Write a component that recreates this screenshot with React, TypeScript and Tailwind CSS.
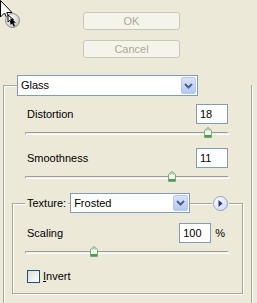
import React from 'react'

const font = { fontFamily: '"Liberation Sans", Arial, sans-serif' }

function Cursor() {
  return (
    <svg className="absolute left-0 top-0" width="22" height="30" viewBox="0 0 22 30">
      <defs>
        <radialGradient id="cg" cx="40%" cy="35%" r="70%">
          <stop offset="0%" stopColor="#ffffff" />
          <stop offset="100%" stopColor="#c4c4c4" />
        </radialGradient>
      </defs>
      <path d="M0.5 0.5 L0.5 17 L4.5 13 L7 18.5 L9 17.5 L6.8 12.5 L12 12.5 Z" fill="#fff" stroke="#000" strokeWidth="1" />
      <circle cx="12.5" cy="20.5" r="7" fill="url(#cg)" stroke="#7a7a7a" strokeWidth="0.8" />
      <path d="M8 15 L8 22 L9.8 20.3 L11.3 23.5 L12.6 22.9 L11.2 19.7 L13.6 19.7 Z" fill="#fff" stroke="#000" strokeWidth="1" />
      <path d="M10.5 18 L10.5 25 L12.2 23.4 L13.7 26.5 L15 25.9 L13.6 22.8 L16 22.8 Z" fill="#000" />
    </svg>
  )
}

function XpButton({ label }: { label: string }) {
  return (
    <div className="flex h-[18px] w-[97px] items-center justify-center rounded-[3px] border border-[#c9c7ba] bg-[#f5f4ea] text-[11px] text-[#aca899]">
      {label}
    </div>
  )
}

function Chevron() {
  return (
    <svg width="9" height="6" viewBox="0 0 9 6">
      <path d="M1 1 L4.5 4.5 L8 1" fill="none" stroke="#4d6185" strokeWidth="2" />
    </svg>
  )
}

function Dropdown({ value, w, h }: { value: string; w: string; h: string }) {
  return (
    <div className={`flex ${w} ${h} items-stretch border border-[#7f9db9] bg-white p-px`}>
      <div className="flex flex-1 items-center pl-[2px] text-[11px] text-black">{value}</div>
      <div className="flex w-[15px] items-center justify-center rounded-[2px] border border-[#bac8ef] bg-gradient-to-b from-[#d9e3fb] to-[#b5c8f4]">
        <Chevron />
      </div>
    </div>
  )
}

function NumBox({ value, w }: { value: string; w: string }) {
  return (
    <div className={`flex h-[20px] ${w} items-center border border-[#7f9db9] bg-white pl-[3px] text-[11px] text-black`}>
      {value}
    </div>
  )
}

function Thumb({ left }: { left: number }) {
  return (
    <svg className="absolute top-0" style={{ left }} width="8" height="11" viewBox="0 0 8 11">
      <path d="M0.5 3.5 L4 0.5 L7.5 3.5 L7.5 10.5 L0.5 10.5 Z" fill="#f4f4ee" stroke="#7fa37f" strokeWidth="1" />
      <rect x="1" y="8" width="6" height="2" fill="#3aa64a" />
      <path d="M2 3.5 L4 1.8 L6 3.5" fill="none" stroke="#7cc286" strokeWidth="1" />
    </svg>
  )
}

function Slider({ pos }: { pos: number }) {
  return (
    <div className="relative h-[11px] w-[204px]">
      <div className="absolute left-0 right-0 top-[5px] h-[3px] rounded-[2px] border-t border-l border-[#9d9c93] border-b border-r border-b-white border-r-white bg-[#f0efe6]" />
      <Thumb left={pos} />
    </div>
  )
}

const etched = 'border border-[#a7a69a] shadow-[inset_1px_1px_0_#fff,1px_1px_0_#fff]'

export default function App() {
  return (
    <div className="relative flex h-[303px] w-[257px] flex-col overflow-hidden bg-[#ece9d8]" style={font}>
      <Cursor />
      <div className="ml-[83px] mt-[12px] flex flex-col gap-[10px]">
        <XpButton label="OK" />
        <XpButton label="Cancel" />
      </div>

      <div className={`ml-[3px] mt-[27px] flex w-[249px] flex-1 flex-col border-b-0 ${etched}`}>
        <div className="-mt-[11px] ml-[13px] bg-[#ece9d8]">
          <Dropdown value="Glass" w="w-[181px]" h="h-[21px]" />
        </div>

        <div className="ml-[23px] mt-[8px] flex w-[201px] items-center justify-between text-[11px] text-black">
          <span>Distortion</span>
          <NumBox value="18" w="w-[32px]" />
        </div>
        <div className="ml-[21px] mt-[3px]">
          <Slider pos={179} />
        </div>

        <div className="ml-[23px] mt-[10px] flex w-[201px] items-center justify-between text-[11px] text-black">
          <span>Smoothness</span>
          <NumBox value="11" w="w-[32px]" />
        </div>
        <div className="ml-[21px] mt-[3px]">
          <Slider pos={143} />
        </div>

        <div className={`ml-[8px] mt-[21px] flex w-[231px] flex-col pb-[8px] ${etched}`}>
          <div className="-mt-[11px] ml-[12px] flex h-[20px] items-center">
            <span className="bg-[#ece9d8] px-[2px] text-[11px] text-black">Texture:</span>
            <div className="ml-[2px] bg-[#ece9d8]">
              <Dropdown value="Frosted" w="w-[120px]" h="h-[20px]" />
            </div>
            <div className="ml-[22px] flex h-[16px] w-[17px] items-center justify-center bg-[#ece9d8]">
              <div className="flex h-[15px] w-[15px] items-center justify-center rounded-full border border-[#8ea0c8] bg-gradient-to-br from-white to-[#cfd9f3]">
                <svg width="5" height="7" viewBox="0 0 5 7">
                  <path d="M0.5 0 L4.5 3.5 L0.5 7 Z" fill="#20388a" />
                </svg>
              </div>
            </div>
          </div>

          <div className="ml-[14px] mt-[10px] flex w-[198px] items-center text-[11px] text-black">
            <span className="flex-1">Scaling</span>
            <NumBox value="100" w="w-[32px]" />
            <span className="ml-[4px]">%</span>
          </div>
          <div className="ml-[12px] mt-[3px]">
            <Slider pos={65} />
          </div>

          <div className="ml-[14px] mt-[11px] flex items-center text-[11px] text-black">
            <div className="h-[13px] w-[13px] border border-[#1c5180] bg-gradient-to-br from-[#dcdcd7] to-white" />
            <span className="ml-[3px]">
              <span className="underline">I</span>nvert
            </span>
          </div>
        </div>
      </div>
    </div>
  )
}
